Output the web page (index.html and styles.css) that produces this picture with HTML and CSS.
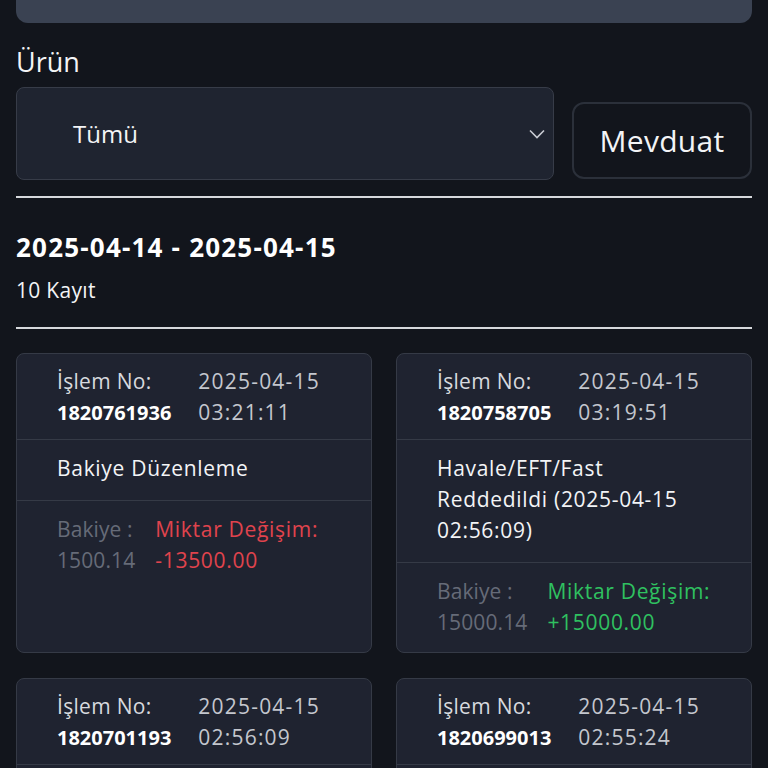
FILE: index.html
```html
<!DOCTYPE html>
<html lang="tr">
<head>
<meta charset="utf-8">
<link rel="stylesheet" href="styles.css">
</head>
<body>
<div class="page">
  <div class="top-box"></div>
  <div class="field-label">Ürün</div>
  <div class="filter-row">
    <div class="select">
      <span class="select-value">Tümü</span>
      <svg class="chevron" width="16" height="10" viewBox="0 0 16 10"><path d="M1 1.5 L8 8.5 L15 1.5" fill="none" stroke="#c9ccd3" stroke-width="1.6"/></svg>
    </div>
    <button class="btn">Mevduat</button>
  </div>
  <hr class="rule">
  <div class="range">2025-04-14 - 2025-04-15</div>
  <div class="count">10 Kayıt</div>
  <hr class="rule rule-2">
  <div class="grid">
    <div class="card">
      <div class="sec head">
        <div class="lbl">İşlem No:</div><div class="date">2025-04-15</div>
        <div class="num">1820761936</div><div class="date">03:21:11</div>
      </div>
      <div class="sec desc">Bakiye Düzenleme</div>
      <div class="sec amounts">
        <div class="muted">Bakiye :</div><div class="neg">Miktar Değişim:</div>
        <div class="muted">1500.14</div><div class="neg">-13500.00</div>
      </div>
    </div>
    <div class="card">
      <div class="sec head">
        <div class="lbl">İşlem No:</div><div class="date">2025-04-15</div>
        <div class="num">1820758705</div><div class="date">03:19:51</div>
      </div>
      <div class="sec desc">Havale/EFT/Fast Reddedildi (2025-04-15 02:56:09)</div>
      <div class="sec amounts">
        <div class="muted">Bakiye :</div><div class="pos">Miktar Değişim:</div>
        <div class="muted">15000.14</div><div class="pos">+15000.00</div>
      </div>
    </div>
    <div class="card">
      <div class="sec head">
        <div class="lbl">İşlem No:</div><div class="date">2025-04-15</div>
        <div class="num">1820701193</div><div class="date">02:56:09</div>
      </div>
      <div class="sec desc">Havale/EFT/Fast</div>
    </div>
    <div class="card">
      <div class="sec head">
        <div class="lbl">İşlem No:</div><div class="date">2025-04-15</div>
        <div class="num">1820699013</div><div class="date">02:55:24</div>
      </div>
      <div class="sec desc">Havale/EFT/Fast</div>
    </div>
  </div>
</div>
</body>
</html>
```
FILE: styles.css
```css
* { box-sizing: border-box; }
html, body { margin: 0; padding: 0; }
body {
  background: #12151c;
  color: #f3f4f6;
  font-family: "Open Sans", "Liberation Sans", sans-serif;
  overflow: hidden;
  height: 768px;
}
.page { padding: 0 16px; }
.top-box {
  height: 23px;
  background: #3a4252;
  border-radius: 0 0 12px 12px;
}
.field-label {
  margin-top: 23px;
  font-size: 27px;
  line-height: 32px;
  color: #f3f4f6;
}
.filter-row {
  margin-top: 9px;
  display: flex;
  align-items: flex-end;
  gap: 18px;
}
.select {
  flex: 0 0 538px;
  height: 93px;
  background: #1f2430;
  border: 1px solid #373c48;
  border-radius: 8px;
  display: flex;
  align-items: center;
  justify-content: space-between;
  padding: 0 8px 0 56px;
}
.select-value { font-size: 24px; color: #f3f4f6; }
.chevron { display: block; }
.btn {
  flex: 1;
  height: 77px;
  margin-bottom: 1px;
  background: #12151c;
  border: 2px solid #2b303a;
  border-radius: 12px;
  color: #f3f4f6;
  font-family: inherit;
  font-size: 30px;
  letter-spacing: 0.3px;
  padding: 0;
}
.rule {
  margin: 16px 0 0;
  border: 0;
  height: 2px;
  background: #d6d8dc;
}
.range {
  margin-top: 33px;
  font-size: 26px;
  font-weight: 700;
  letter-spacing: 1.2px;
  line-height: 32px;
  color: #ffffff;
}
.count {
  margin-top: 13px;
  font-size: 21px;
  letter-spacing: 0.3px;
  line-height: 28px;
  color: #f3f4f6;
}
.rule-2 { margin-top: 23px; }
.grid {
  margin-top: 24px;
  display: grid;
  grid-template-columns: 1fr 1fr;
  column-gap: 24px;
  row-gap: 25px;
}
.card {
  background: #1f2330;
  border: 1px solid #353a46;
  border-radius: 8px;
  min-height: 300px;
}
.sec {
  padding: 13px 40px 16px 40px;
  font-size: 21px;
  letter-spacing: 0.7px;
  line-height: 31px;
}
.sec + .sec { border-top: 1px solid #353a46; }
.head {
  padding-top: 12px;
  padding-bottom: 11px;
  display: grid;
  grid-template-columns: max-content max-content;
  column-gap: 27px;
}
.lbl { color: #d7d9de; letter-spacing: 0.3px; }
.num { font-weight: 700; color: #ffffff; font-size: 20px; letter-spacing: 0; }
.date { color: #c4c7ce; letter-spacing: 1.2px; }
.desc { color: #f3f4f6; }
.amounts {
  padding-bottom: 14px;
  display: grid;
  grid-template-columns: max-content max-content;
  column-gap: 20px;
}
.muted { color: #666b78; letter-spacing: 0.1px; }
.neg { color: #e0434d; }
.pos { color: #2fc160; }
```
